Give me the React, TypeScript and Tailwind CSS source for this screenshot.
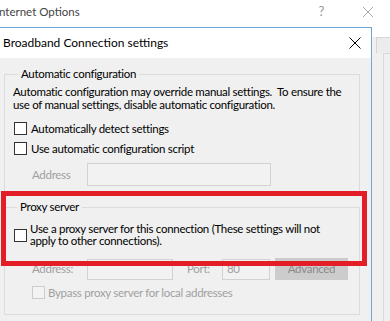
import React from 'react';

const font = { fontFamily: 'Lato, "Noto Sans", sans-serif' };

const Check: React.FC<{ disabled?: boolean }> = ({ disabled }) => (
  <span
    className={
      'block w-[13px] h-[13px] shrink-0 border ' +
      (disabled ? 'border-[#cccccc] bg-[#f3f3f3]' : 'border-[#333333] bg-white')
    }
  />
);

const App: React.FC = () => {
  return (
    <div
      className="w-[390px] h-[321px] overflow-hidden relative bg-[#f0f0f0] text-[11.5px] tracking-[-0.3px] text-black whitespace-nowrap"
      style={font}
    >
      {/* Parent window title bar */}
      <div className="h-[27px] bg-white flex items-center pb-[4px]">
        <span className="text-[#444444] ml-[-1px] tracking-normal">nternet Options</span>
        <span className="ml-auto text-[#999999] text-[13px] mr-[38px]">?</span>
        <svg width="12" height="12" viewBox="0 0 12 12" className="mr-[16px]">
          <path d="M1 1 L11 11 M11 1 L1 11" stroke="#aaaaaa" strokeWidth="1" />
        </svg>
      </div>

      <div className="flex h-[294px]">
        {/* Dialog */}
        <div className="w-[372px] shrink-0 flex flex-col border-t border-r border-[#6aa6d6]">
          {/* Dialog title bar */}
          <div className="h-[30px] shrink-0 bg-white flex items-center pl-[3px] pr-[10px]">
            <span className="text-[12px] tracking-normal">Broadband Connection settings</span>
            <svg width="12" height="12" viewBox="0 0 12 12" className="ml-auto">
              <path d="M0.5 0.5 L11.5 11.5 M11.5 0.5 L0.5 11.5" stroke="#000000" strokeWidth="1" />
            </svg>
          </div>

          {/* Dialog body */}
          <div className="flex-1 pl-[4px] pr-[11px] pt-[8px]">
            <fieldset className="border border-[#dcdcdc] pl-[8px] pb-[7px]">
              <legend className="ml-[5px] px-[3px] leading-[16px]">Automatic configuration</legend>
              <p className="pt-[3px] leading-[13px]">
                Automatic configuration may override manual settings.&nbsp; To ensure the
                <br />
                use of manual settings, disable automatic configuration.
              </p>
              <label className="mt-[11px] flex items-center gap-[4px] pl-[1px] h-[13px]">
                <Check />
                <span>Automatically detect settings</span>
              </label>
              <label className="mt-[7px] flex items-center gap-[4px] pl-[1px] h-[13px]">
                <Check />
                <span>Use automatic configuration script</span>
              </label>
              <div className="mt-[8px] flex items-center h-[23px]">
                <span className="w-[74px] pl-[19px] text-[#a0a0a0]">Address</span>
                <span className="block w-[184px] h-[23px] border border-[#d2d2d2] bg-[#f2f2f2]" />
              </div>
            </fieldset>

            <fieldset className="mt-[5px] border border-[#dcdcdc] pl-[8px] pb-[15px]">
              <legend className="ml-[4px] px-[3px] leading-[16px]">Proxy server</legend>
              <label className="mt-[8px] flex items-center gap-[3px] pl-[1px]">
                <Check />
                <span className="leading-[12px]">
                  Use a proxy server for this connection (These settings will not
                  <br />
                  apply to other connections).
                </span>
              </label>
              <div className="mt-[11px] flex items-center h-[22px] text-[#a0a0a0]">
                <span className="w-[74px] pl-[19px]">Address:</span>
                <span className="block w-[86px] h-[21px] border border-[#d2d2d2] bg-[#f2f2f2]" />
                <span className="ml-[14px] w-[35px]">Port:</span>
                <span className="flex items-center w-[48px] h-[21px] border border-[#d2d2d2] bg-[#f2f2f2] pl-[4px]">
                  80
                </span>
                <span className="ml-[5px] flex items-center justify-center w-[73px] h-[22px] bg-[#cccccc] text-[#8a8a8a]">
                  Advanced
                </span>
              </div>
              <label className="mt-[6px] flex items-center gap-[3px] pl-[19px] h-[13px] text-[#a0a0a0]">
                <Check disabled />
                <span>Bypass proxy server for local addresses</span>
              </label>
            </fieldset>
          </div>
        </div>

        {/* Parent window peeking out on the right */}
        <div className="flex-1 flex flex-col">
          <div className="h-[10px] bg-white" />
          <div className="h-[16px] ml-[4px] border-l border-t border-[#d6d6d6] bg-[#ececec]" />
          <div className="flex-1 ml-[11px] border-l border-t border-[#d9d9d9]" />
        </div>
      </div>

      {/* Red annotation box */}
      <div className="absolute left-[1px] top-[191px] w-[366px] h-[75px] border-[5px] border-[#e41e26]" />
    </div>
  );
};

export default App;
